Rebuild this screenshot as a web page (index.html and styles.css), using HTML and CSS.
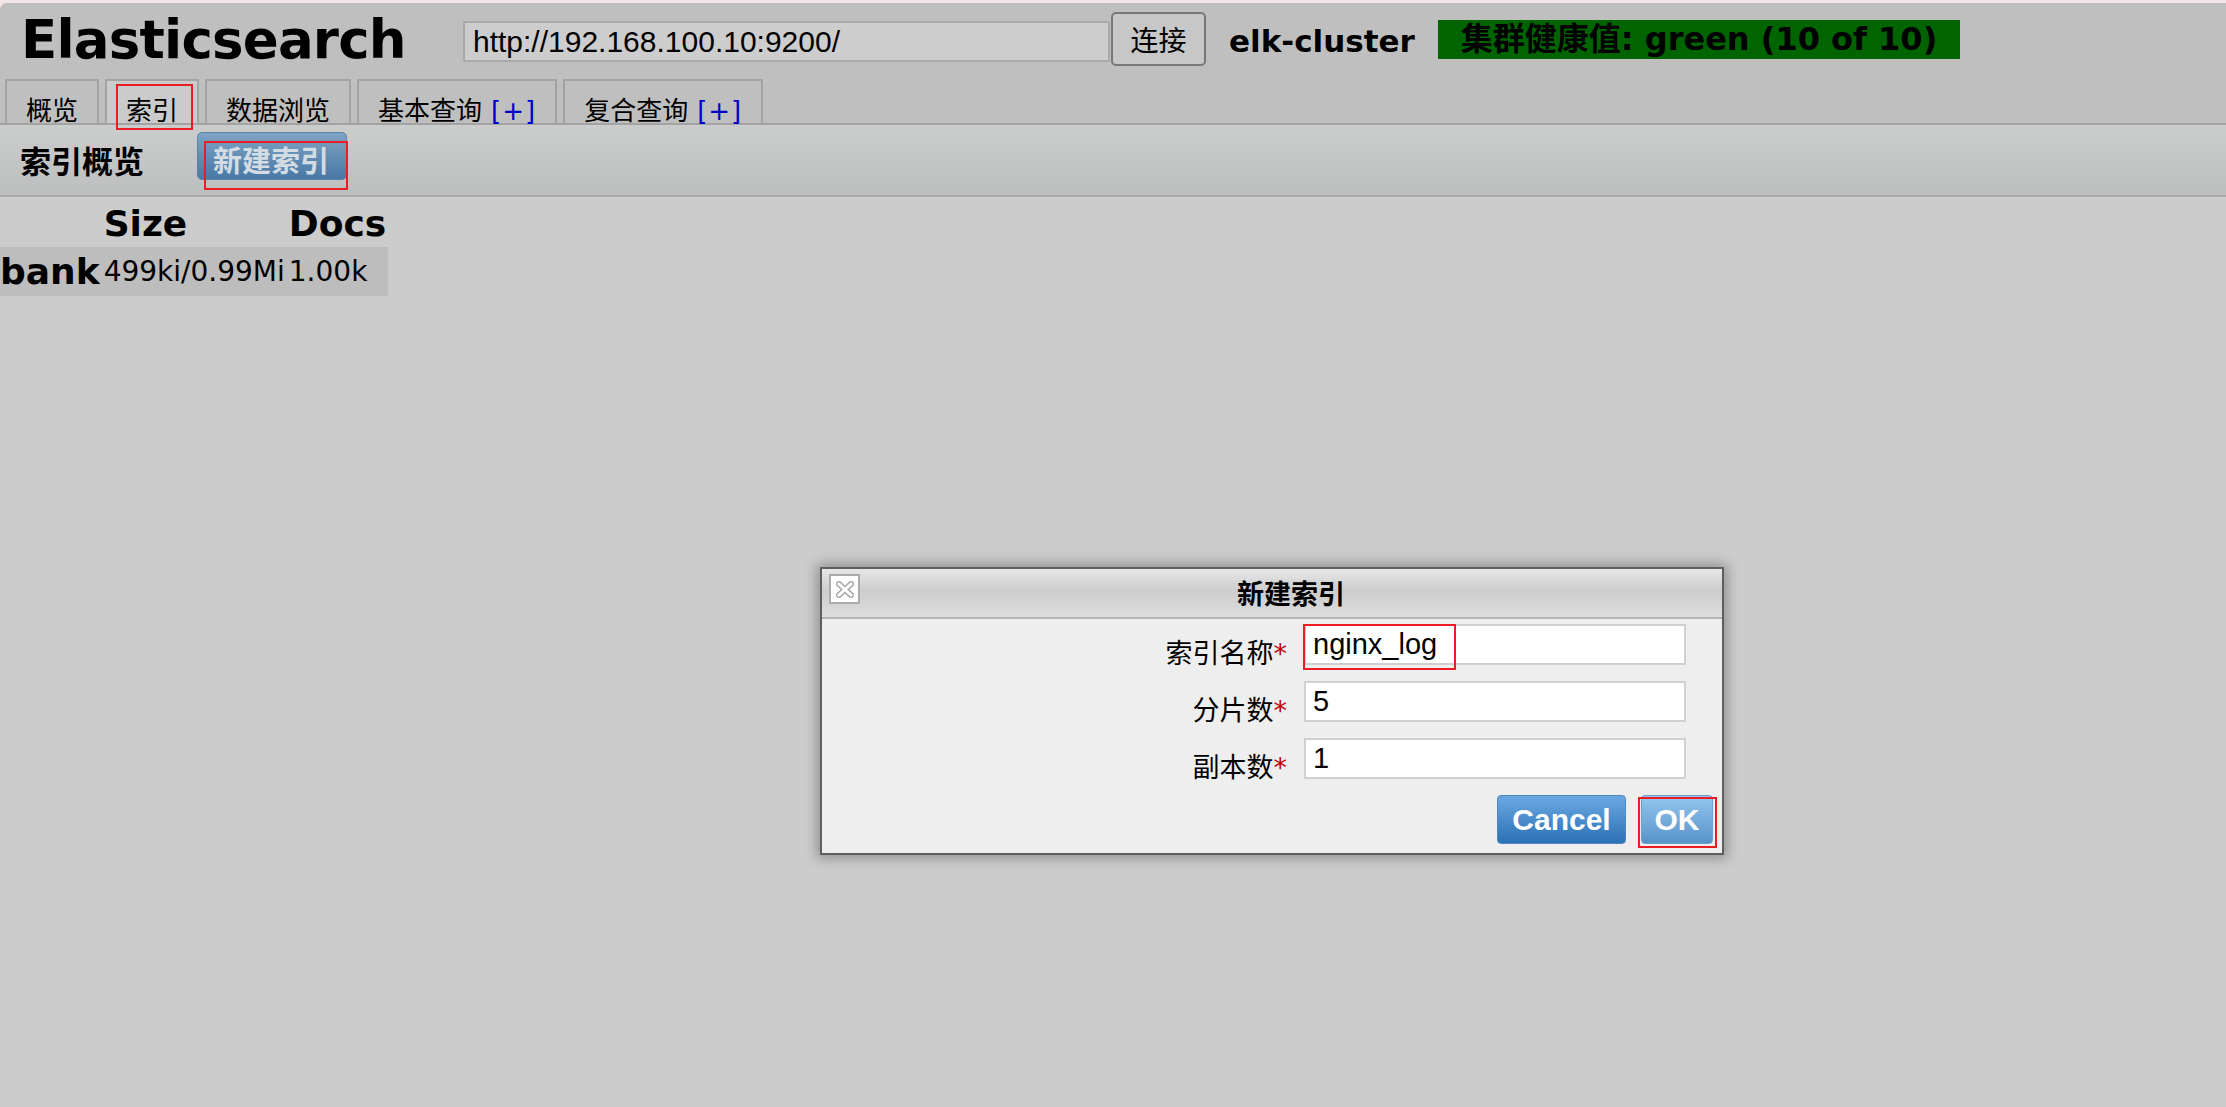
FILE: index.html
```html
<!DOCTYPE html>
<html lang="zh">
<head>
<meta charset="utf-8">
<title>Elasticsearch</title>
<link rel="stylesheet" href="styles.css">
</head>
<body>
<div class="app">
  <header class="header">
    <div class="topbar">
      <h1 class="logo">Elasticsearch</h1>
      <input class="url" type="text" value="http://192.168.100.10:9200/">
      <button class="connect">连接</button>
      <span class="cluster">elk-cluster</span>
      <span class="health">集群健康值: green (10 of 10)</span>
    </div>
    <nav class="tabs">
      <div class="tab">概览</div>
      <div class="tab active">索引</div>
      <div class="tab">数据浏览</div>
      <div class="tab">基本查询<span class="plus">[+]</span></div>
      <div class="tab">复合查询<span class="plus">[+]</span></div>
    </nav>
  </header>
  <div class="toolbar">
    <h2 class="toolbar-title">索引概览</h2>
    <button class="new-index">新建索引</button>
  </div>
  <table class="overview">
    <thead>
      <tr><th class="first"></th><th>Size</th><th>Docs</th></tr>
    </thead>
    <tbody>
      <tr class="row"><th class="first">bank</th><td>499ki/0.99Mi</td><td>1.00k</td></tr>
    </tbody>
  </table>
</div>

<div class="dialog">
  <div class="dialog-head">
    <span class="close">
      <svg width="18" height="17" viewBox="0 0 18 17">
        <path d="M3 3 L15 14 M15 3 L3 14" stroke="#a9a9a9" stroke-width="6" stroke-linecap="square" fill="none"/>
        <path d="M3 3 L15 14 M15 3 L3 14" stroke="#ffffff" stroke-width="3" stroke-linecap="square" fill="none"/>
      </svg>
    </span>
    <div class="dialog-title">新建索引</div>
  </div>
  <div class="dialog-body">
    <div class="field">
      <label class="label">索引名称<span class="req">*</span></label>
      <input class="text" type="text" value="nginx_log">
    </div>
    <div class="field">
      <label class="label">分片数<span class="req">*</span></label>
      <input class="text" type="text" value="5">
    </div>
    <div class="field">
      <label class="label">副本数<span class="req">*</span></label>
      <input class="text" type="text" value="1">
    </div>
    <div class="actions">
      <button class="btn cancel">Cancel</button>
      <button class="btn ok">OK</button>
    </div>
  </div>
</div>

<div class="mark mark-tab"></div>
<div class="mark mark-new"></div>
<div class="mark mark-name"></div>
<div class="mark mark-ok"></div>
</body>
</html>
```

FILE: styles.css
```css
html {
  background: #f4e6e6;
}
body {
  margin: 0;
  padding-top: 3px;
  font-family: "DejaVu Sans", "Noto Sans CJK SC", sans-serif;
  color: #000;
}
.app {
  background: #cccccc;
  min-height: 1104px;
  border-top-left-radius: 7px;
  overflow: hidden;
}
.header {
  background: #bfbfbf;
}
.topbar {
  display: flex;
  align-items: flex-start;
  height: 76px;
}
.logo {
  margin: 7px 0 0 21px;
  width: 442px;
  font-size: 53px;
  letter-spacing: -0.8px;
  line-height: 60px;
  font-weight: bold;
  white-space: nowrap;
}
.url {
  box-sizing: border-box;
  margin: 18px 0 0 0;
  width: 647px;
  height: 41px;
  border: 2px solid #a9a9a9;
  background: #cdcdcd;
  padding: 0 0 0 8px;
  font-family: "Liberation Sans", sans-serif;
  font-size: 30px;
  color: #000;
  outline: none;
}
.connect {
  box-sizing: border-box;
  margin: 9px 0 0 1px;
  width: 95px;
  height: 54px;
  border: 2px solid #777;
  border-radius: 5px;
  background: #c7c7c7;
  font-family: "Noto Sans CJK SC", sans-serif;
  font-size: 28px;
  color: #000;
  padding: 0;
  line-height: 50px;
}
.cluster {
  margin: 18px 0 0 23px;
  font-size: 31px;
  font-weight: bold;
  line-height: 40px;
  white-space: nowrap;
}
.health {
  margin: 17px 0 0 23px;
  height: 39px;
  padding: 0 23px;
  background: #006400;
  font-size: 32px;
  font-weight: bold;
  line-height: 39px;
  white-space: nowrap;
}
.tabs {
  display: flex;
  align-items: flex-end;
  gap: 6px;
  padding-left: 5px;
  height: 44px;
}
.tab {
  box-sizing: border-box;
  height: 44px;
  padding: 18px 19px 0;
  border: 2px solid #a3a3a3;
  border-bottom: none;
  background: #bfbfbf;
  font-size: 26px;
  line-height: 24px;
  white-space: nowrap;
}
.tab.active {
  background: #cbcbcb;
}
.plus {
  color: #0000cc;
  padding-left: 9px;
  letter-spacing: 1px;
}
.toolbar {
  display: flex;
  align-items: flex-start;
  height: 70px;
  padding-left: 20px;
  border-top: 2px solid #a3a3a3;
  border-bottom: 2px solid #a9a9a9;
  background: linear-gradient(#cbcccc, #bdbebf);
}
.toolbar-title {
  margin: 20px 0 0 0;
  font-size: 31px;
  line-height: 35px;
  font-weight: bold;
}
.new-index {
  box-sizing: border-box;
  margin: 7px 0 0 53px;
  width: 150px;
  height: 48px;
  padding: 13px 0 0 15px;
  border: 1px solid #5a82a8;
  border-radius: 5px;
  background: linear-gradient(#7fa4c5, #4878a5);
  font-family: "DejaVu Sans", "Noto Sans CJK SC", sans-serif;
  font-size: 29px;
  font-weight: bold;
  line-height: 33px;
  color: #d3dbe3;
  text-align: left;
}
.overview {
  border-collapse: collapse;
  border-spacing: 0;
}
.overview thead th {
  padding: 4px 2px 0;
  font-size: 36px;
  line-height: 46px;
  font-weight: bold;
  text-align: left;
}
.overview .row {
  background: #bdbdbd;
}
.overview .row th,
.overview .row td {
  padding: 0 2px;
  line-height: 49px;
  text-align: left;
  white-space: nowrap;
}
.overview .row th {
  font-size: 36px;
  font-weight: bold;
}
.overview .row td {
  font-size: 28px;
}
.overview thead .first,
.overview .row .first {
  padding-left: 0;
}

/* dialog */
.dialog {
  position: absolute;
  left: 820px;
  top: 567px;
  width: 904px;
  height: 288px;
  box-sizing: border-box;
  border: 2px solid #5e5e5e;
  background: #eeeeee;
  box-shadow: 0 0 12px 3px rgba(0, 0, 0, 0.3);
}
.dialog-head {
  display: flex;
  align-items: flex-start;
  height: 48px;
  border-bottom: 2px solid #b5b5b5;
  background: linear-gradient(#e7e7e7 0%, #cdcdcd 45%, #dddddd 100%);
}
.close {
  box-sizing: border-box;
  display: flex;
  align-items: center;
  justify-content: center;
  margin: 5px 0 0 7px;
  width: 31px;
  height: 30px;
  border: 2px solid #ababab;
  background: #ffffff;
}
.dialog-title {
  flex: 1;
  padding-top: 3px;
  text-align: center;
  font-size: 27px;
  font-weight: bold;
  line-height: 45px;
}
.dialog-body {
  padding-top: 5px;
}
.field {
  display: flex;
  justify-content: flex-end;
  align-items: flex-start;
  height: 41px;
  margin-bottom: 16px;
  padding-right: 36px;
}
.label {
  margin: 15px 17px 0 0;
  font-size: 27px;
  line-height: 30px;
  white-space: nowrap;
}
.req {
  color: #c00000;
}
.text {
  box-sizing: border-box;
  width: 382px;
  height: 41px;
  border: 2px solid #d0d0d0;
  background: #ffffff;
  padding: 0 0 0 7px;
  font-family: "Liberation Sans", sans-serif;
  font-size: 29px;
  color: #000;
  outline: none;
}
.actions {
  display: flex;
  justify-content: flex-end;
  gap: 15px;
  margin-top: 2px;
  padding-right: 9px;
}
.btn {
  box-sizing: border-box;
  height: 49px;
  border-radius: 4px;
  font-family: "Liberation Sans", sans-serif;
  font-size: 30px;
  font-weight: bold;
  color: #ffffff;
  padding: 0;
}
.cancel {
  width: 129px;
  border: 1px solid #4f86c0;
  background: linear-gradient(#6ba8e2, #2b72b6);
}
.ok {
  width: 72px;
  border: 1px solid #6a9fd0;
  background: linear-gradient(#94c6ee, #5893c9);
}

/* red annotation boxes */
.mark {
  position: absolute;
  box-sizing: border-box;
  border: 2px solid #ec1c24;
}
.mark-tab {
  left: 116px;
  top: 84px;
  width: 77px;
  height: 46px;
}
.mark-new {
  left: 204px;
  top: 141px;
  width: 144px;
  height: 49px;
}
.mark-name {
  left: 1303px;
  top: 624px;
  width: 153px;
  height: 46px;
}
.mark-ok {
  left: 1638px;
  top: 797px;
  width: 79px;
  height: 51px;
}
```
